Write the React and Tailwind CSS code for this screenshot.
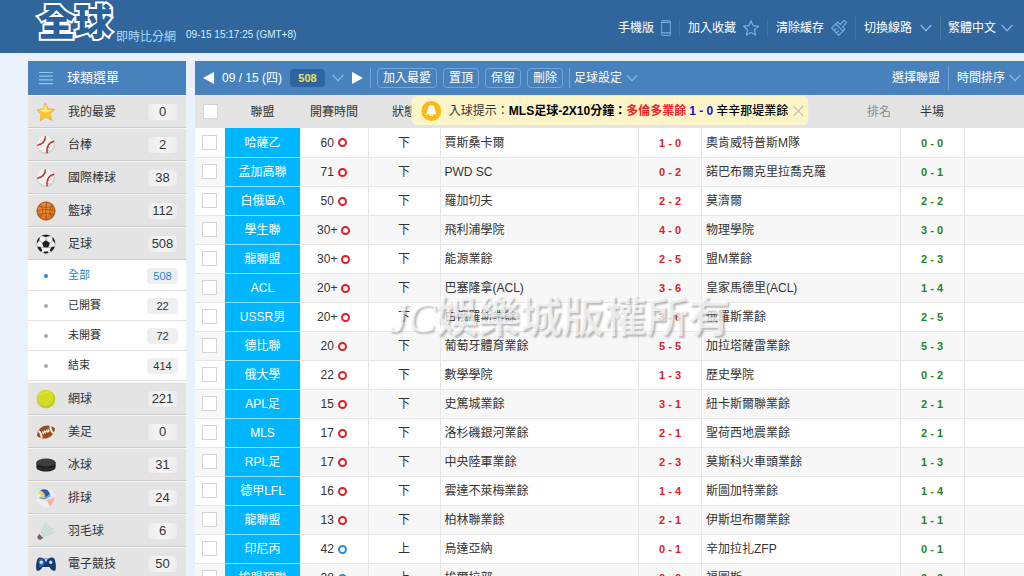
import { useState } from "react"

const SPORTS = [
  { name: "我的最愛", count: 0, icon: StarIcon },
  { name: "台棒", count: 2, icon: BaseballIcon },
  { name: "國際棒球", count: 38, icon: BaseballIcon },
  { name: "籃球", count: 112, icon: BasketballIcon },
  {
    name: "足球",
    count: 508,
    icon: SoccerIcon,
    children: [
      { name: "全部", count: 508 },
      { name: "已開賽", count: 22 },
      { name: "未開賽", count: 72 },
      { name: "結束", count: 414 },
    ],
  },
  { name: "網球", count: 221, icon: TennisIcon },
  { name: "美足", count: 0, icon: FootballIcon },
  { name: "冰球", count: 31, icon: PuckIcon },
  { name: "排球", count: 24, icon: VolleyballIcon },
  { name: "羽毛球", count: 6, icon: ShuttlecockIcon },
  { name: "電子競技", count: 50, icon: GamepadIcon },
]

const MATCHES = [
  { league: "哈薩乙", time: "60", half: "下", home: "賈斯桑卡爾", score: "1 - 0", away: "奧肯威特普斯M隊", ht: "0 - 0" },
  { league: "孟加高聯", time: "71", half: "下", home: "PWD SC", score: "0 - 2", away: "諾巴布爾克里拉喬克羅", ht: "0 - 1" },
  { league: "白俄區A", time: "50", half: "下", home: "羅加切夫", score: "2 - 2", away: "莫濟爾", ht: "2 - 2" },
  { league: "學生聯", time: "30+", half: "下", home: "飛利浦學院", score: "4 - 0", away: "物理學院", ht: "3 - 0" },
  { league: "龍聯盟", time: "30+", half: "下", home: "能源業餘", score: "2 - 5", away: "盟M業餘", ht: "2 - 3" },
  { league: "ACL", time: "20+", half: "下", home: "巴塞隆拿(ACL)", score: "3 - 6", away: "皇家馬德里(ACL)", ht: "1 - 4" },
  { league: "USSR男", time: "20+", half: "下", home: "白俄羅斯業餘", score: "3 - 6", away: "俄羅斯業餘", ht: "2 - 5" },
  { league: "德比聯", time: "20", half: "下", home: "葡萄牙體育業餘", score: "5 - 5", away: "加拉塔薩雷業餘", ht: "5 - 3" },
  { league: "俄大學", time: "22", half: "下", home: "數學學院", score: "1 - 3", away: "歷史學院", ht: "0 - 2" },
  { league: "APL足", time: "15", half: "下", home: "史篤城業餘", score: "3 - 1", away: "紐卡斯爾聯業餘", ht: "2 - 1" },
  { league: "MLS", time: "17", half: "下", home: "洛杉磯銀河業餘", score: "2 - 1", away: "聖荷西地震業餘", ht: "2 - 1" },
  { league: "RPL足", time: "17", half: "下", home: "中央陸軍業餘", score: "2 - 3", away: "莫斯科火車頭業餘", ht: "1 - 3" },
  { league: "德甲LFL", time: "16", half: "下", home: "雲達不萊梅業餘", score: "1 - 4", away: "斯圖加特業餘", ht: "1 - 4" },
  { league: "龍聯盟", time: "13", half: "下", home: "柏林聯業餘", score: "2 - 1", away: "伊斯坦布爾業餘", ht: "1 - 1" },
  { league: "印尼丙", time: "42", half: "上", home: "烏達亞納", score: "0 - 1", away: "辛加拉扎ZFP", ht: "0 - 1" },
  { league: "埃盟預聯", time: "38", half: "上", home: "埃爾拉部", score: "0 - 0", away: "福圖斯", ht: "0 - 0" },
]

function StarIcon() {
  return (
    <svg viewBox="0 0 20 20" className="size-5" aria-hidden="true">
      <path
        d="M9.4 1.2l2.7 5.6 6.6.5-4.6 4.6 1.9 6.6-6.1-3.2-5.8 3.5.9-6.7L.8 7.9l6.3-1z"
        fill="#fbc52d"
        stroke="#e8a51c"
        strokeWidth=".6"
        strokeLinejoin="round"
      />
      <path d="M9.3 2.8l1.8 5 5.2.4-6.6 2.2-6.6-1.9 4.7-.9z" fill="#ffe987" />
    </svg>
  )
}

function BaseballIcon() {
  return (
    <svg viewBox="0 0 20 20" className="size-5" aria-hidden="true">
      <circle cx="10" cy="10" r="9.2" fill="#d3d0cf" />
      <circle cx="9.500" cy="9" r="8.300" fill="#f5f3f2" />
      <path d="M9.300 1.200c.3 4.300-2.800 7.800-8.300 9.200M18.300 6.300c-5 .8-8.200 5-7.100 12" fill="none" stroke="#b5323a" strokeWidth="1.400" />
      <path d="M7.700 4.200l2.300.6M6 6.700l1.900 1.400M3.700 8.300l1.200 2M15 6.800l1 1.900M12.700 9l1.900 1.300M11.300 12l2.200.6M10.700 15.200l2.200 0" stroke="#b5323a" strokeWidth=".6" />
    </svg>
  )
}

function BasketballIcon() {
  return (
    <svg viewBox="0 0 20 20" className="size-5" aria-hidden="true">
      <circle cx="10" cy="10" r="9.2" fill="#dd7420" />
      <circle cx="9" cy="8" r="6.500" fill="#ec8a34" />
      <g fill="none" stroke="#9a4d17" strokeWidth=".8">
        <circle cx="10" cy="10" r="9.100" />
        <path d="M10.500 1c-.8 6-.8 12 0 18M1 9.500c6-1.200 12-1.200 18 0M4 3.300c3.500 3.500 3.500 9.500 0 13.200M16.500 3.600c-3.500 3.500-3.500 9.500 0 12.600M2 13.600c5-1.600 11-1.600 16 0M3 5.500c4 1 10 1 14 0" />
      </g>
    </svg>
  )
}

function SoccerIcon() {
  return (
    <svg viewBox="0 0 20 20" className="size-5" aria-hidden="true">
      <circle cx="10" cy="10" r="9.200" fill="#f1f1f1" stroke="#a5a5a5" strokeWidth=".6" />
      <g fill="#1d1f21">
        <path d="M10 6.300l3.900 2.800-1.500 4.500H7.600L6.100 9.100z" />
        <path d="M5.500 1.900L10 3l4.500-1.100C11.800.5 8.200.5 5.500 1.900zM.8 9.500L3.500 6.300l.1-3.200C1.700 4.800.8 7 .8 9.500zM19.200 9.500L16.500 6.300l-.1-3.200c1.900 1.700 2.800 3.900 2.800 6.400z" />
        <path d="M1.300 12.500l3.300.5 1.700 3.600-1.300 1.200c-1.800-1.200-3-3-3.700-5.300zM18.700 12.500l-3.300.5-1.700 3.600 1.300 1.200c1.800-1.200 3-3 3.700-5.300zM8 17.500h4l.6 1.500c-1.700.5-3.500.5-5.200 0z" />
      </g>
      <path d="M10 2.800v3.800M3 6.300l3.400 2.900M17 6.300l-3.400 2.900M4.600 13.300l3.100-.1M15.400 13.300l-3.100-.1" stroke="#888" strokeWidth=".6" />
    </svg>
  )
}

function TennisIcon() {
  return (
    <svg viewBox="0 0 20 20" className="size-5" aria-hidden="true">
      <circle cx="10" cy="10" r="9.300" fill="#c0cc1a" />
      <circle cx="9.500" cy="9" r="8" fill="#d3dd26" />
      <path d="M2 5c4 .5 9-.5 12-3.500" fill="none" stroke="#dfe756" strokeWidth=".8" />
    </svg>
  )
}

function FootballIcon() {
  return (
    <svg viewBox="0 0 20 20" className="size-5" aria-hidden="true">
      <g transform="rotate(-22 10 10)">
        <path d="M.3 10C3 5 6.500 3.800 10 3.800S17 5 19.700 10C17 15 13.500 16.200 10 16.200S3 15 .3 10z" fill="#9a4b1c" />
        <path d="M2.700 6.900c1.200 2 1.200 4.200 0 6.200l1.700 1.400c1.600-3 1.600-6 0-9zM17.300 6.900c-1.200 2-1.200 4.200 0 6.200l-1.700 1.400c-1.600-3-1.600-6 0-9z" fill="#f6efe9" />
        <path d="M6 9.500h8M7.200 7.700v3.600M9.100 7.700v3.600M11 7.700v3.600M12.900 7.700v3.600" stroke="#f6efe9" strokeWidth="1" />
      </g>
    </svg>
  )
}

function PuckIcon() {
  return (
    <svg viewBox="0 0 20 20" className="size-5" aria-hidden="true">
      <path d="M.4 7.500v5c0 2.300 4.300 4 9.600 4s9.600-1.700 9.600-4v-5z" fill="#1f1f1f" />
      <ellipse cx="10" cy="7.500" rx="9.600" ry="3.900" fill="#3d3d3d" />
      <path d="M2 12.500c4 2.200 12 2.200 16 0" stroke="#3b3b3b" strokeWidth="1" fill="none" />
    </svg>
  )
}

function VolleyballIcon() {
  return (
    <svg viewBox="0 0 20 20" className="size-5" aria-hidden="true">
      <circle cx="10" cy="10" r="9.200" fill="#efeeee" />
      <path d="M4 2.800C8-.2 13 1.500 14 6.500L8.500 10C9.500 6 8 4 4 2.800z" fill="#2c5cab" />
      <path d="M3 3.500c4 0 6.500 2.500 5 6.500L4.500 8.500C5.500 6.500 4.500 5 2 5.500z" fill="#f5cf3a" />
      <path d="M3.500 9.500l5 1.500 6-3.500" fill="none" stroke="#58a6de" strokeWidth="1.500" />
      <path d="M10 12c3-.5 5.500-1.500 8.500-3 .2 4-2 8-5.500 9.500 0-2.500-1-4.500-3-6.500z" fill="#f0b3a5" />
    </svg>
  )
}

function ShuttlecockIcon() {
  return (
    <svg viewBox="0 0 20 20" className="size-5" aria-hidden="true">
      <path d="M3.500 12.500L8.500 1.500l3.500 1.200 2.500 1.800 2.500 2.800 2.500 4.200L7.500 16.500z" fill="#cfe3dd" />
      <path d="M5 13L10.500 2.500M5.500 13.500L14 5M6.500 14.500L17 7.500M7 15.500l11.500-4.500" stroke="#b5cdc8" strokeWidth=".6" />
      <path d="M3.500 12.500l4 4-2.500 2c-2 .8-4-.8-3.500-3z" fill="#776269" />
      <path d="M3.300 12.500l4.200 4.200" stroke="#f5f5f5" strokeWidth="1" />
    </svg>
  )
}

function GamepadIcon() {
  return (
    <svg viewBox="0 0 20 20" className="size-5" aria-hidden="true">
      <path d="M1.500 5C3 3.300 5.500 3.200 7 4.500h6c1.500-1.300 4-1.200 5.500.5 1.300 3.500 1.800 7.500 1 11.200-2 1.500-4 .3-6-3.200H6.500c-2 3.500-4 4.700-6 3.200C-.3 12.500.2 8.500 1.500 5z" fill="#153a70" />
      <path d="M2.500 5.500C4 4 6 4.500 7.500 6l1 4-5 4z" fill="#2767b0" />
      <circle cx="5.300" cy="8.300" r="1.700" fill="#c9dcf2" />
      <circle cx="14.700" cy="8.300" r="1.700" fill="#c9dcf2" />
      <path d="M8 4.500h4l-2 4z" fill="#a9cdf0" />
    </svg>
  )
}

function Chevron() {
  return (
    <svg viewBox="0 0 12 8" className="pointer-events-none h-2 w-3 shrink-0" fill="none" stroke="#84b6e6" strokeWidth="1.300" aria-hidden="true">
      <path d="M.7 1L6 6.700 11.300 1" />
    </svg>
  )
}

function Dropdown({ label, options, className }) {
  return (
    <label className={className}>
      <span className="sr-only">{label}</span>
      <select className="h-6 cursor-pointer appearance-none bg-transparent leading-6 outline-none">
        {options.map((o) => (
          <option key={o} className="text-black">
            {o}
          </option>
        ))}
      </select>
      <Chevron />
    </label>
  )
}

function Header() {
  return (
    <header className="flex h-[53px] items-start justify-between bg-[#31669d] pr-[11px] pl-[38px]">
      <div className="flex items-end">
        <h1 className="flex items-end">
          <span className="pr-1 text-[37px] leading-[48px] font-black text-[#2b619b] [font-style:oblique_8deg] [-webkit-text-stroke:4px_white] [paint-order:stroke_fill]">
            全球
          </span>
          <span className="pb-[3px] text-[12px] leading-4 text-[#a5dcf8]">即時比分網</span>
        </h1>
        <time className="ml-[10px] pb-[3px] text-[10px] leading-5 text-[#d5edfb]">09-15 15:17:25 (GMT+8)</time>
      </div>
      <nav className="flex h-14 items-center text-[12px] leading-4 text-white">
        <a href="#mobile" className="flex items-center gap-[7px] pr-2">
          手機版
          <svg viewBox="0 0 10 16" className="h-4 w-[10px]" fill="none" stroke="#77aee0" aria-hidden="true">
            <rect x=".6" y=".6" width="8.800" height="14.800" rx="1.200" />
            <path d="M.6 2.300h8.800M.6 12.900h8.800" strokeWidth="1.300" />
          </svg>
        </a>
        <a href="#favorite" className="flex items-center gap-[7px] border-l border-[#44759f] px-2">
          加入收藏
          <svg viewBox="0 0 16 16" className="size-4" fill="none" stroke="#77aee0" strokeWidth="1.200" strokeLinejoin="round" aria-hidden="true">
            <path d="M8 .8l2.200 4.900 5.200.5-3.900 3.600 1.100 5.300L8 12.400l-4.600 2.700 1.100-5.300L.6 6.200l5.200-.5z" />
          </svg>
        </a>
        <a href="#clear" className="flex items-center gap-[7px] border-l border-[#44759f] px-2">
          清除緩存
          <svg viewBox="0 0 16 16" className="size-4" fill="none" stroke="#77aee0" strokeWidth="1.200" strokeLinejoin="round" aria-hidden="true">
            <path d="M9.300 4.600l3-3.400c1.300-1.300 3.500.7 2.400 2.200l-3 3.500 2.200 2.200-1.900 2L4.900 4l2-1.900z" />
            <path d="M4.900 4L.6 8.100l7.200 7.200 4.200-4.200M3 10.500l2.600-2.300M5.400 12.900l2.500-2.400" />
          </svg>
        </a>
        <Dropdown label="線路" options={["切換線路", "備用線路"]} className="flex items-center gap-[7px] border-l border-[#44759f] px-2" />
        <Dropdown label="語言" options={["繁體中文", "简体中文"]} className="flex items-center gap-1 border-l border-[#44759f] pl-[7px]" />
      </nav>
    </header>
  )
}

function Sidebar() {
  const [filter, setFilter] = useState("全部")

  return (
    <aside className="w-[158px] shrink-0">
      <h2 className="flex h-[34px] items-center gap-[14px] bg-[#4882bd] pl-[11px] text-[13px] text-white">
        <svg viewBox="0 0 14 14" className="size-[14px]" stroke="#93c3ee" strokeWidth="1.200" aria-hidden="true">
          <path d="M0 1.500h14M0 5.200h14M0 8.900h14M0 12.600h14" />
        </svg>
        球類選單
      </h2>
      <ul>
        {SPORTS.map(({ name, count, icon: Icon, children }) => (
          <li key={name}>
            <a
              href="#sport"
              className="flex h-[33px] items-center border-t border-b border-t-[#f4f4f4] border-b-[#cdcdcd] bg-[#e4e4e4] pr-[9px] pl-2 text-[12px] text-[#333]"
            >
              <Icon />
              <span className="ml-3 flex-1">{name}</span>
              <span className="w-[29px] rounded-sm bg-linear-to-r from-[#ececec] via-[#f5f5f5] to-[#ececec] text-center text-[13px] leading-4">{count}</span>
            </a>
            {children && (
              <ul className="bg-white py-px">
                {children.map((c) => (
                  <li key={c.name} className="border-b border-[#e4e4e4]">
                    <button
                      onClick={() => setFilter(c.name)}
                      className={`flex h-[29px] w-full items-center pr-2 pl-4 text-left text-[11px] ${filter === c.name ? "text-[#2a83cf]" : "text-[#333]"}`}
                    >
                      <span className={`size-1 rounded-full ${filter === c.name ? "bg-[#2a83cf]" : "bg-[#aaa]"}`} />
                      <span className="ml-5 flex-1">{c.name}</span>
                      <span className="w-[31px] rounded-sm bg-[#efefef] text-center leading-4">{c.count}</span>
                    </button>
                  </li>
                ))}
              </ul>
            )}
          </li>
        ))}
      </ul>
    </aside>
  )
}

function Toolbar() {
  return (
    <div className="flex h-[34px] items-center bg-[#4882bd] pr-[3px] pl-2 text-[12px] leading-4 text-white">
      <button aria-label="前一天">
        <svg viewBox="0 0 11 12" className="h-3 w-[11px]" fill="#fff" aria-hidden="true">
          <path d="M11 0v12L0 6z" />
        </svg>
      </button>
      <label className="ml-2 flex items-center gap-[7px]">
        <span className="sr-only">日期</span>
        <select className="h-6 cursor-pointer appearance-none bg-transparent leading-6 outline-none">
          <option className="text-black">09 / 15 (四)</option>
          <option className="text-black">09 / 16 (五)</option>
        </select>
        <span className="w-[35px] rounded-sm bg-[#2f659f] text-center text-[11px] leading-[18px] font-bold text-[#e9e05f]">508</span>
        <Chevron />
      </label>
      <button aria-label="後一天" className="ml-2">
        <svg viewBox="0 0 11 12" className="h-3 w-[11px]" fill="#fff" aria-hidden="true">
          <path d="M0 0v12l11-6z" />
        </svg>
      </button>
      <div className="ml-[7px] flex items-center gap-[6px] border-x border-[#74a6d8] px-[6px]">
        {["加入最愛", "置頂", "保留", "刪除"].map((t) => (
          <button key={t} className="h-5 rounded-sm border border-[#74a6d8] px-[5px] leading-4">
            {t}
          </button>
        ))}
      </div>
      <Dropdown label="設定" options={["足球設定"]} className="ml-1 flex items-center gap-[3px]" />
      <button className="ml-auto pr-2">選擇聯盟</button>
      <Dropdown label="排序" options={["時間排序", "聯盟排序"]} className="flex items-center gap-[3px] border-l border-[#74a6d8] pl-2" />
    </div>
  )
}

function GoalToast({ onClose }) {
  return (
    <div
      role="status"
      className="absolute top-[35px] left-1/2 flex h-[29px] -translate-x-1/2 items-center rounded-md bg-[#fcf5c8] pr-1 pl-[10px] text-[12px] leading-4 whitespace-nowrap text-black"
    >
      <svg viewBox="0 0 20 20" className="mr-2 size-5" aria-hidden="true">
        <circle cx="10" cy="10" r="10" fill="#fbb917" />
        <path d="M10 4.200c-2.500 0-3.500 2-3.700 4.200-.2 2-.7 3.300-1.900 4.800h11.200c-1.200-1.500-1.700-2.800-1.900-4.800-.2-2.200-1.200-4.200-3.700-4.200z" fill="#fff" />
        <path d="M8.200 14.300h3.600" stroke="#fff" strokeWidth="1.400" />
      </svg>
      <span className="text-[#333]">入球提示：</span>
      <b>MLS足球-2X10分鐘：</b>
      <b className="text-[#e8262b]">多倫多業餘</b>
      <b className="mx-[3px] text-[#1414c8]">1 - 0</b>
      <b className="font-medium">辛辛那堤業餘</b>
      <button aria-label="關閉" onClick={onClose} className="ml-1">
        <svg viewBox="0 0 12 12" className="size-3" stroke="#cfc9b4" strokeWidth="1.500" aria-hidden="true">
          <path d="M1 1l10 10M11 1L1 11" />
        </svg>
      </button>
    </div>
  )
}

function CheckBox({ label }) {
  return (
    <input
      type="checkbox"
      aria-label={label}
      className="block size-[15px] appearance-none border border-[#cfd6dd] bg-white checked:bg-[#4882bd]"
    />
  )
}

function MatchTable() {
  return (
    <table className="w-full table-fixed border-collapse text-[12px] leading-4 text-[#333]">
      <colgroup>
        <col className="w-[30px]" />
        <col className="w-[75px]" />
        <col className="w-[68px]" />
        <col className="w-[72px]" />
        <col />
        <col className="w-[63px]" />
        <col />
        <col className="w-[64px]" />
        <col className="w-[60px]" />
      </colgroup>
      <thead>
        <tr className="h-[33px] bg-[#e4e4e4]">
          <th className="pl-2">
            <CheckBox label="全選" />
          </th>
          <th className="font-normal">聯盟</th>
          <th className="font-normal">開賽時間</th>
          <th className="font-normal">狀態</th>
          <th />
          <th />
          <th className="pr-[9px] text-right font-normal text-[#8a8a8a]">排名</th>
          <th className="font-normal">半場</th>
          <th />
        </tr>
      </thead>
      <tbody>
        {MATCHES.map((m, i) => (
          <tr key={i} className="h-[29px] border-b border-[#e6e6e6] bg-white even:bg-[#f7f7f7]">
            <td className="pl-[7px]">
              <CheckBox label={m.home} />
            </td>
            <td className="border-b border-[#8fe0ff] bg-[#00b7ff] pt-px text-center text-white">{m.league}</td>
            <td className="border-r border-[#e6e6e6] pt-px">
              <span className="flex items-center justify-center gap-1">
                {m.time}
                <span className={`size-[9px] rounded-full border-2 ${m.half === "上" ? "border-[#2f8be0]" : "border-[#dd2027]"}`} />
              </span>
            </td>
            <td className="border-r border-[#e6e6e6] pt-px text-center">{m.half}</td>
            <td className="border-r border-[#e6e6e6] pt-px pl-1">{m.home}</td>
            <td className="border-r border-[#e6e6e6] pt-px text-center text-[11px] font-bold text-[#dd2027]">{m.score}</td>
            <td className="border-r border-[#e6e6e6] pt-px pl-1">{m.away}</td>
            <td className="border-r border-[#e6e6e6] pt-px text-center text-[11px] font-bold text-[#1f8427]">{m.ht}</td>
            <td />
          </tr>
        ))}
      </tbody>
    </table>
  )
}

export default function App() {
  const [showToast, setShowToast] = useState(true)

  return (
    <div className="min-h-screen bg-[#eaf1fa] font-['Liberation_Sans','Noto_Sans_CJK_TC',sans-serif]">
      <Header />
      <div className="flex gap-[9px] pt-2 pl-7">
        <Sidebar />
        <main className="relative min-w-0 flex-1">
          <Toolbar />
          <MatchTable />
          {showToast && <GoalToast onClose={() => setShowToast(false)} />}
          <p className="pointer-events-none absolute top-[229px] left-[194px] font-['Liberation_Serif','Noto_Sans_CJK_TC',serif] text-[42px] leading-[56px] font-bold whitespace-nowrap text-white/70 [text-shadow:2px_2px_2px_rgb(120_120_120_/_0.5)]">
            <i className="font-normal">JC</i>娛樂城版權所有
          </p>
        </main>
      </div>
    </div>
  )
}
